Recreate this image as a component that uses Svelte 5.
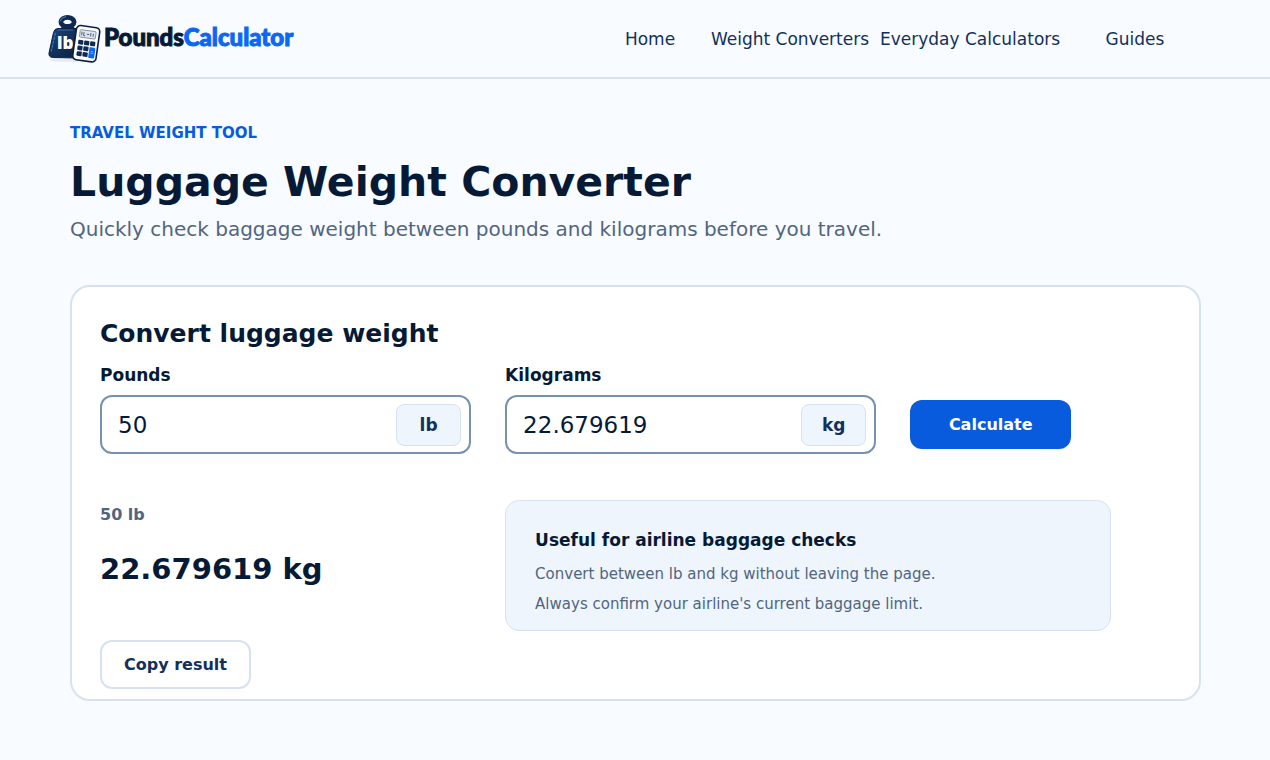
<script>
  const KG_PER_LB = 0.45359237;

  const links = ["Home", "Weight Converters", "Everyday Calculators", "Guides"];

  let pounds = $state("50");
  let kilograms = $state("22.679619");
  let lastEdited = $state("lb");
  let result = $state({ from: "50 lb", to: "22.679619 kg" });

  // max 6 decimals, no trailing zeros
  function format(value) {
    return String(Number(value.toFixed(6)));
  }

  function calculate(event) {
    event.preventDefault();
    if (lastEdited === "lb") {
      const value = Number(pounds);
      if (Number.isNaN(value)) return;
      kilograms = format(value * KG_PER_LB);
      result = { from: `${pounds} lb`, to: `${kilograms} kg` };
    } else {
      const value = Number(kilograms);
      if (Number.isNaN(value)) return;
      pounds = format(value / KG_PER_LB);
      result = { from: `${kilograms} kg`, to: `${pounds} lb` };
    }
  }

  function copyResult() {
    navigator.clipboard?.writeText(result.to);
  }
</script>

<header class="site-header">
  <a class="brand" href="#home">
    <svg class="brand-icon" width="56" height="52" viewBox="0 0 56 52" aria-hidden="true">
      <defs>
        <linearGradient id="weight" x1="0" y1="0" x2="1" y2="1">
          <stop offset="0" stop-color="#1d4a84" />
          <stop offset="0.35" stop-color="#143561" />
          <stop offset="1" stop-color="#0a1f40" />
        </linearGradient>
      </defs>
      <ellipse cx="28" cy="47" rx="25" ry="2" fill="#e3ebf5" />
      <path d="M16 11 H28 Q27 14 30 17 H13 Q17 14 16 11 Z" fill="#0f2a50" />
      <ellipse cx="21.500" cy="9" rx="6.600" ry="4.600" fill="none" stroke="#0f2a50" stroke-width="4.800" />
      <path d="M14 8.500 Q15 4.500 20 3.600" fill="none" stroke="#5b80a8" stroke-width="1" />
      <path
        d="M12 15.500 H31 Q34 15.500 34 19 L36 42 Q36 45 33 45 L6.500 44.500 Q2.500 44 3 40 L7.500 19.500 Q8.500 15.500 12 15.500 Z"
        fill="url(#weight)"
        stroke="#0b2144"
        stroke-width="1"
      />
      <path d="M9.500 20 L5 39" fill="none" stroke="#2f78cf" stroke-width="1.200" stroke-dasharray="3 1" />
      <path d="M12 17 H27" fill="none" stroke="#3977bc" stroke-width="0.800" />
      <text class="brand-lb" x="11" y="36">lb</text>
      <g transform="translate(31 12) rotate(8)">
        <rect x="0" y="0" width="23.500" height="34.500" rx="4" fill="#fff" stroke="#0b2144" stroke-width="1.600" />
        <rect x="4" y="4" width="16" height="7.500" rx="1" fill="#dce6ef" stroke="#60728a" stroke-width="0.700" />
        <path d="M6 6v3.500M8 6v3.500h1.500M11 7.800h2.500M15 6v3.500M17.500 6.500v3" fill="none" stroke="#35495f" stroke-width="0.800" />
        <g fill="#0f2a50">
          <rect x="3.500" y="14.200" width="5.200" height="4.600" rx="1" />
          <rect x="9.500" y="14.200" width="5.200" height="4.600" rx="1" />
          <rect x="15.500" y="14.200" width="5.200" height="4.600" rx="1" />
          <rect x="3.500" y="20" width="5.200" height="4.600" rx="1" />
          <rect x="9.500" y="20" width="5.200" height="4.600" rx="1" />
          <rect x="3.500" y="25.800" width="5.200" height="4.600" rx="1" />
          <rect x="9.500" y="25.800" width="5.200" height="4.600" rx="1" />
        </g>
        <rect x="15.500" y="20" width="6" height="11" rx="1.200" fill="#0b68f5" />
        <path d="M17.200 24.300h2.500M17.200 26h2.500" stroke="#b9d6ff" stroke-width="0.600" />
      </g>
    </svg>
    <span class="brand-name">Pounds<span class="accent">Calculator</span></span>
  </a>
  <nav class="nav" aria-label="Main">
    {#each links as link}
      <a href="#{link.toLowerCase().replace(' ', '-')}">{link}</a>
    {/each}
  </nav>
</header>

<main>
  <p class="eyebrow">TRAVEL WEIGHT TOOL</p>
  <h1>Luggage Weight Converter</h1>
  <p class="intro">Quickly check baggage weight between pounds and kilograms before you travel.</p>

  <section class="card">
    <h2>Convert luggage weight</h2>

    <form class="row" onsubmit={calculate}>
      <div class="field">
        <label for="pounds">Pounds</label>
        <div class="input-box">
          <input
            id="pounds"
            type="text"
            inputmode="decimal"
            bind:value={pounds}
            oninput={() => (lastEdited = "lb")}
          />
          <span class="unit">lb</span>
        </div>
      </div>
      <div class="field">
        <label for="kilograms">Kilograms</label>
        <div class="input-box">
          <input
            id="kilograms"
            type="text"
            inputmode="decimal"
            bind:value={kilograms}
            oninput={() => (lastEdited = "kg")}
          />
          <span class="unit">kg</span>
        </div>
      </div>
      <button class="calculate" type="submit">Calculate</button>
    </form>

    <div class="row results">
      <div class="result">
        <p class="result-from">{result.from}</p>
        <p class="result-to">{result.to}</p>
        <button class="copy" type="button" onclick={copyResult}>Copy result</button>
      </div>
      <aside class="note">
        <h3>Useful for airline baggage checks</h3>
        <p>Convert between lb and kg without leaving the page.</p>
        <p>Always confirm your airline's current baggage limit.</p>
      </aside>
    </div>
  </section>
</main>

<style>
  :global(body) {
    margin: 0;
    background: #f8fbff;
    color: #061a36;
    font-family: "DejaVu Sans", sans-serif;
  }

  h1,
  h2,
  h3,
  p {
    margin: 0;
  }

  .site-header {
    display: flex;
    align-items: center;
    justify-content: space-between;
    height: 77px;
    padding: 0 60px 0 46px;
    border-bottom: 2px solid #d6e2f0;
  }

  .brand {
    display: flex;
    align-items: center;
    gap: 2px;
    color: #061a36;
    text-decoration: none;
  }

  .brand-lb {
    fill: #fff;
    font: 800 17px "Open Sans", sans-serif;
  }

  .brand-name {
    padding-bottom: 4px;
    font: 900 24px/28px Lato, sans-serif;
    -webkit-text-stroke: 1px currentColor;
  }

  .accent {
    color: #0b68f5;
  }

  .nav {
    display: grid;
    grid-template-columns: 100px 180px 180px 150px;
    text-align: center;
  }

  .nav a {
    color: #12305b;
    font-size: 17px;
    line-height: 24px;
    text-decoration: none;
    white-space: nowrap;
  }

  main {
    padding: 44px 69px 44px 70px;
  }

  .eyebrow {
    color: #075bdc;
    font-size: 15px;
    font-weight: 700;
    line-height: 20px;
  }

  h1 {
    margin-top: 14px;
    font-size: 41px;
    line-height: 50px;
  }

  .intro {
    margin-top: 8px;
    color: #52657f;
    font-size: 20px;
    line-height: 28px;
  }

  .card {
    margin-top: 42px;
    padding: 28px 28px 10px;
    background: #fff;
    border: 2px solid #d6e2f0;
    border-radius: 20px;
  }

  h2 {
    font-size: 25px;
    line-height: 38px;
  }

  .row {
    display: grid;
    grid-template-columns: minmax(0, 37fr) minmax(0, 37fr) minmax(0, 26fr);
    column-gap: 34px;
  }

  form.row {
    align-items: end;
    margin-top: 10px;
  }

  label {
    display: block;
    margin-bottom: 8px;
    font-size: 17px;
    font-weight: 700;
    line-height: 24px;
  }

  .input-box {
    display: flex;
    align-items: center;
    padding: 7px 8px 6px 16px;
    border: 2px solid #7892ad;
    border-radius: 12px;
  }

  input {
    flex: 1;
    min-width: 0;
    padding: 0;
    border: 0;
    outline: 0;
    background: none;
    color: #061a36;
    font: 23px/32px "DejaVu Sans", sans-serif;
  }

  .input-box:focus-within {
    border-color: #075bdc;
  }

  .unit {
    width: 63px;
    border: 1px solid #d6e2f0;
    border-radius: 8px;
    background: #eef5fd;
    color: #12305b;
    font-size: 17px;
    font-weight: 700;
    line-height: 40px;
    text-align: center;
  }

  button {
    height: 49px;
    border-radius: 12px;
    font: 700 16px "DejaVu Sans", sans-serif;
    cursor: pointer;
  }

  .calculate {
    justify-self: start;
    width: 161px;
    margin-bottom: 5px;
    border: 0;
    background: #075bdc;
    color: #fff;
  }

  .results {
    align-items: start;
    margin-top: 46px;
  }

  .result-from {
    color: #52657f;
    font-size: 16px;
    font-weight: 700;
    line-height: 30px;
  }

  .result-to {
    margin-top: 19px;
    font-size: 29px;
    font-weight: 700;
    line-height: 40px;
  }

  .copy {
    width: 151px;
    margin-top: 51px;
    border: 2px solid #d6e2f0;
    background: #fff;
    color: #12305b;
  }

  .note {
    grid-column: 2 / 4;
    margin-right: 60px;
    padding: 24px 29px 11px;
    border: 1px solid #d6e2f0;
    border-radius: 14px;
    background: #eef5fd;
  }

  .note h3 {
    margin-bottom: 4px;
    font-size: 17px;
    line-height: 30px;
  }

  .note p {
    color: #52657f;
    font-size: 15px;
    line-height: 30px;
  }
</style>
